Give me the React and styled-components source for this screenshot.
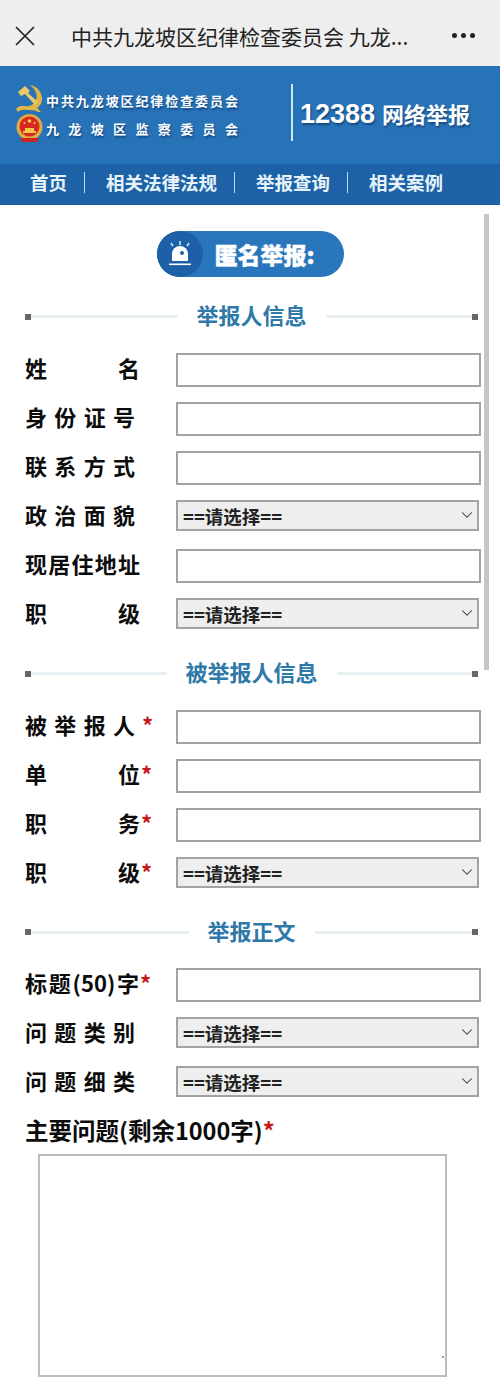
import styled, { createGlobalStyle } from "styled-components";
import { ChevronDown } from "lucide-react";

const CJK = `"Noto Sans CJK SC", "Liberation Sans", sans-serif`;

const GlobalStyle = createGlobalStyle`
  html, body {
    margin: 0;
    background: #fff;
    font-family: ${CJK};
  }
  * {
    box-sizing: border-box;
  }
`;

const Page = styled.div`
  position: relative;
  width: 500px;
  height: 1392px;
  overflow: hidden;
  background: #fff;
`;

const TopBar = styled.div`
  display: flex;
  align-items: center;
  height: 66px;
  padding: 5px 25px 0 15px;
  background: #eeeeee;
  color: #222;
`;

const CloseIcon = styled.svg`
  flex: none;
  width: 20px;
  height: 20px;
  margin-right: 36px;
`;

const PageTitle = styled.div`
  font-size: 21px;
  line-height: 30px;
  white-space: nowrap;
`;

const Dots = styled.div`
  display: flex;
  gap: 4px;
  margin-left: auto;
`;

const Dot = styled.span`
  width: 5px;
  height: 5px;
  border-radius: 50%;
  background: #222;
`;

const Banner = styled.div`
  display: flex;
  align-items: center;
  height: 98px;
  padding: 0 0 3px 16px;
  background: #2873b8;
  color: #fff;
  text-shadow: 1px 2px 2px rgba(10, 50, 100, 0.65);
`;

const Emblems = styled.div`
  display: flex;
  flex-direction: column;
  gap: 2px;
  width: 30px;
`;

const OrgNames = styled.div`
  display: flex;
  flex-direction: column;
  gap: 9px;
  width: 192px;
  padding-top: 2px;
`;

const OrgName = styled.div`
  display: flex;
  justify-content: space-between;
  font-size: 13px;
  line-height: 19px;
  font-weight: 700;
`;

const BannerRule = styled.div`
  width: 2px;
  height: 57px;
  margin: -2px 7px 0 53px;
  background: #cfe6f5;
`;

const Hotline = styled.div`
  display: flex;
  align-items: baseline;
  gap: 7px;
  font-size: 22px;
  font-weight: 700;
  white-space: nowrap;
`;

const HotlineNumber = styled.span`
  font-family: "Liberation Sans", sans-serif;
  font-size: 27px;
`;

const Nav = styled.nav`
  display: flex;
  align-items: center;
  height: 41px;
  padding: 0 0 4px 30px;
  background: #1d62a6;
  border-bottom: 1px solid #1a5a98;
  color: #e6f3fb;
`;

const NavItem = styled.span`
  font-size: 18.5px;
  line-height: 28px;
  font-weight: 700;
  white-space: nowrap;
`;

const NavRule = styled.span`
  width: 1.5px;
  height: 21px;
  margin: 0 21px 0 16.5px;
  background: #b9dcf2;
`;

const Main = styled.main`
  padding: 26px 19px 0 25px;
`;

const PillWrap = styled.div`
  display: flex;
  justify-content: center;
  margin-bottom: 5px;
  padding-right: 6px;
`;

const Pill = styled.div`
  display: flex;
  align-items: center;
  width: 187px;
  height: 46px;
  border-radius: 23px;
  background: #2a76bd;
  color: #fff;
`;

const PillBadge = styled.div`
  display: flex;
  align-items: center;
  justify-content: center;
  flex: none;
  width: 46px;
  height: 46px;
  border-radius: 50%;
  background: #1d60a8;
`;

const PillText = styled.div`
  margin-left: 12px;
  font-size: 23px;
  font-weight: 900;
  white-space: nowrap;
  -webkit-text-stroke: 0.4px #fff;
`;

const SectionHead = styled.div`
  display: flex;
  align-items: center;
  height: ${(p) => p.$height || 63}px;
  padding: 6px 3px 0 0;
`;

const HeadSquare = styled.span`
  flex: none;
  width: 6px;
  height: 6px;
  background: #666;
`;

const HeadLine = styled.span`
  flex: 1;
  height: 3px;
  background: #e8eff2;
`;

const HeadTitle = styled.h2`
  margin: 0 19px 5px;
  font-size: 22px;
  line-height: 30px;
  font-weight: 700;
  color: #2e79a8;
  white-space: nowrap;
`;

const Row = styled.div`
  display: grid;
  grid-template-columns: 151px 1fr;
  align-items: center;
  height: 49px;
`;

const LabelCell = styled.div`
  display: flex;
  align-items: center;
  padding-bottom: 5px;
  font-size: 22px;
  font-weight: 700;
  color: #0c0c0c;
  white-space: nowrap;
`;

const Label = styled.label`
  width: ${(p) => p.$width}px;
  text-align-last: justify;
`;

const Star = styled.span`
  margin-left: ${(p) => p.$gap ?? 1}px;
  color: #c8161d;
`;

const TextInput = styled.input`
  display: block;
  width: 305px;
  height: 34px;
  border: 2px solid #a3a3a3;
  border-radius: 0;
  background: #fff;
  outline: none;
`;

const SelectWrap = styled.div`
  position: relative;
  width: 303px;
  height: 31px;
  margin-top: -2px;
  color: #333;

  svg {
    position: absolute;
    top: 6px;
    right: 3px;
    pointer-events: none;
  }
`;

const Select = styled.select`
  appearance: none;
  display: block;
  width: 100%;
  height: 100%;
  padding: 0 0 0 5px;
  border: 2px solid #a3a3a3;
  border-radius: 0;
  background: #eeeeee;
  color: #222;
  font-family: ${CJK};
  font-size: 18.5px;
  font-weight: 700;
  outline: none;
`;

const Problem = styled.div`
  display: flex;
  align-items: center;
  height: 47px;
  padding-bottom: 1px;
  font-size: 23.5px;
  font-weight: 700;
  color: #0c0c0c;
  white-space: nowrap;
`;

const TextBoxWrap = styled.div`
  position: relative;
  width: 409px;
  margin-left: 13px;
`;

const TextBox = styled.textarea`
  display: block;
  width: 100%;
  height: 223px;
  border: 2px solid #bdbdbd;
  border-radius: 0;
  background: #fff;
  outline: none;
  resize: none;
`;

const ResizeDot = styled.span`
  position: absolute;
  right: 3px;
  bottom: 19px;
  width: 2px;
  height: 2px;
  background: #999;
`;

const ScrollBar = styled.div`
  position: absolute;
  top: 214px;
  left: 484px;
  width: 5px;
  height: 456px;
  background: #c6c6c6;
`;

const SectionHeading = ({ children, height }) => (
  <SectionHead $height={height}>
    <HeadSquare />
    <HeadLine />
    <HeadTitle>{children}</HeadTitle>
    <HeadLine />
    <HeadSquare />
  </SectionHead>
);

const Field = ({ label, width, required, starGap, select }) => (
  <Row>
    <LabelCell>
      <Label $width={width}>{label}</Label>
      {required && <Star $gap={starGap}>*</Star>}
    </LabelCell>
    {select ? (
      <SelectWrap>
        <Select defaultValue="">
          <option value="">==请选择==</option>
        </Select>
        <ChevronDown size={18} strokeWidth={1.4} />
      </SelectWrap>
    ) : (
      <TextInput type="text" />
    )}
  </Row>
);

function PartyEmblem() {
  return (
    <svg width="26" height="27" viewBox="0 0 26 27">
      <path
        d="M14 0C21 1 26 7 26 14C26 18 24 21 21 23L25 27H22L18 25C13 26 6 23 2 27L0 24C4 19 9 22 13 21C19 20 22 13 20 8C19 4 16 2 14 0Z"
        fill="#e2b548"
      />
      <path d="M2 7L9 1L14 6L12 8L22 17L19 20L9 9L5 11Z" fill="#ecc964" />
    </svg>
  );
}

function StateEmblem() {
  return (
    <svg width="27" height="29" viewBox="0 0 27 29">
      <circle cx="13.5" cy="13" r="13" fill="#e0aa45" />
      <circle cx="13.5" cy="12.5" r="10" fill="#d5281f" />
      <circle cx="13.5" cy="7" r="1.8" fill="#f3d250" />
      <circle cx="8.5" cy="9" r="1" fill="#f3d250" />
      <circle cx="18.5" cy="9" r="1" fill="#f3d250" />
      <path d="M7 17h13v2H7zM9 14h9v3H9z" fill="#f0c64d" />
      <path d="M4 24h19l-2 4H6z" fill="#c8261f" />
    </svg>
  );
}

function SirenIcon() {
  return (
    <svg width="24" height="28" viewBox="0 0 24 28" fill="#fff">
      <path d="M4 21v-7a8 8 0 0 1 16 0v7z" />
      <rect x="1" y="23.5" width="22" height="1.6" />
      <circle cx="14" cy="13" r="2" fill="#1d60a8" />
      <path d="M12 1v4M3 3l2 3M21 3l-2 3" stroke="#d5e8f6" strokeWidth="1.5" fill="none" />
    </svg>
  );
}

export default function App() {
  return (
    <Page>
      <GlobalStyle />
      <TopBar>
        <CloseIcon viewBox="0 0 20 20">
          <path d="M1 1l18 18M19 1L1 19" stroke="#222" strokeWidth="1.7" fill="none" />
        </CloseIcon>
        <PageTitle>中共九龙坡区纪律检查委员会 九龙...</PageTitle>
        <Dots>
          <Dot />
          <Dot />
          <Dot />
        </Dots>
      </TopBar>

      <Banner>
        <Emblems>
          <PartyEmblem />
          <StateEmblem />
        </Emblems>
        <OrgNames>
          <OrgName>
            {"中共九龙坡区纪律检查委员会".split("").map((c, i) => (
              <span key={i}>{c}</span>
            ))}
          </OrgName>
          <OrgName>
            {"九龙坡区监察委员会".split("").map((c, i) => (
              <span key={i}>{c}</span>
            ))}
          </OrgName>
        </OrgNames>
        <BannerRule />
        <Hotline>
          <HotlineNumber>12388</HotlineNumber>
          网络举报
        </Hotline>
      </Banner>

      <Nav>
        <NavItem>首页</NavItem>
        <NavRule />
        <NavItem>相关法律法规</NavItem>
        <NavRule />
        <NavItem>举报查询</NavItem>
        <NavRule />
        <NavItem>相关案例</NavItem>
      </Nav>

      <Main>
        <PillWrap>
          <Pill>
            <PillBadge>
              <SirenIcon />
            </PillBadge>
            <PillText>匿名举报:</PillText>
          </Pill>
        </PillWrap>

        <SectionHeading>举报人信息</SectionHeading>
        <Field label="姓名" width={115} />
        <Field label="身份证号" width={110} />
        <Field label="联系方式" width={110} />
        <Field label="政治面貌" width={110} select />
        <Field label="现居住地址" width={115} />
        <Field label="职级" width={115} select />

        <SectionHeading>被举报人信息</SectionHeading>
        <Field label="被举报人" width={110} required starGap={7} />
        <Field label="单位" width={115} required />
        <Field label="职务" width={115} required />
        <Field label="职级" width={115} required select />

        <SectionHeading height={62}>举报正文</SectionHeading>
        <Field label="标题(50)字" width={114} required />
        <Field label="问题类别" width={110} select />
        <Field label="问题细类" width={110} select />

        <Problem>
          主要问题(剩余1000字)
          <Star $gap={0}>*</Star>
        </Problem>
        <TextBoxWrap>
          <TextBox />
          <ResizeDot />
        </TextBoxWrap>
      </Main>

      <ScrollBar />
    </Page>
  );
}
